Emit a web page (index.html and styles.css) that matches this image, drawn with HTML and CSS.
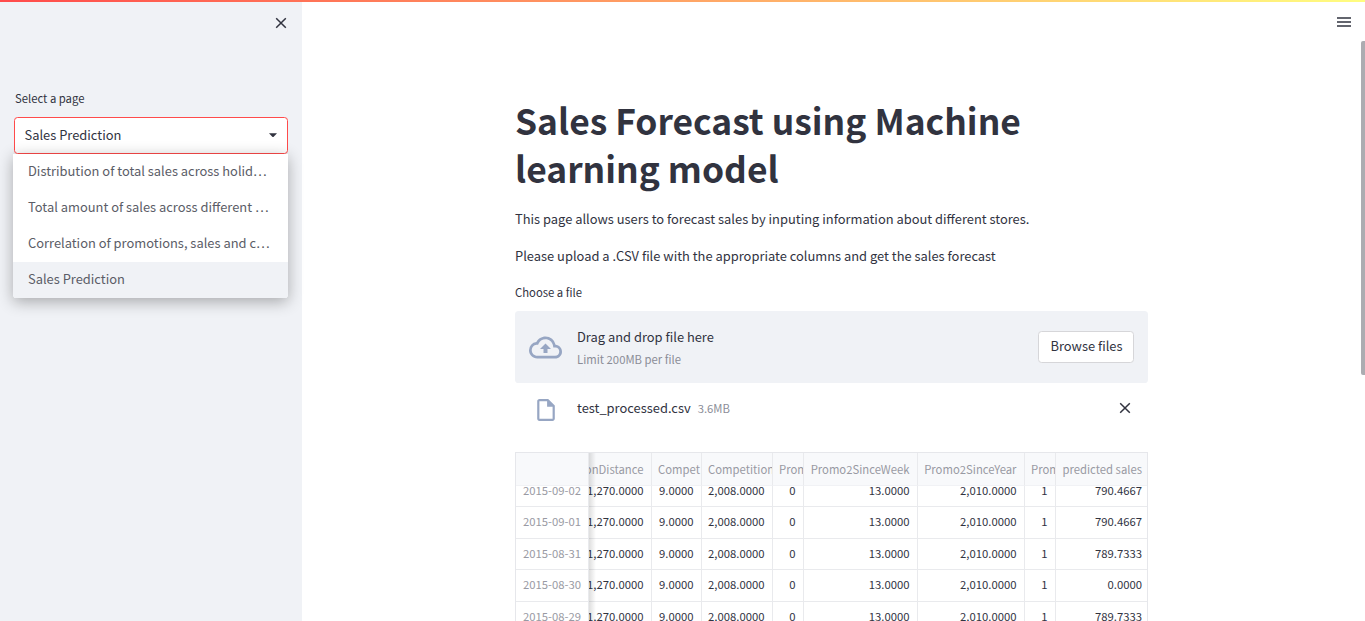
FILE: index.html
```html
<!DOCTYPE html>
<html lang="en">
<head>
<meta charset="utf-8">
<title>Sales Forecast</title>
<link rel="stylesheet" href="styles.css">
</head>
<body>
<div class="decoration"></div>
<div class="app">
  <aside class="sidebar">
    <div class="sidebar-top">
      <svg class="close" viewBox="0 0 12 12"><path d="M1.2 1.2 10.8 10.8M10.8 1.2 1.2 10.8"/></svg>
    </div>
    <div class="label side-label"><span>Select a page</span></div>
    <div class="select">
      <div class="select-box"><span>Sales Prediction</span><svg class="caret" viewBox="0 0 8 5"><path d="M0 .3h8L4.7 3.7q-.7.6-1.4 0z"/></svg></div>
      <ul class="menu">
        <li>Distribution of total sales across holid…</li>
        <li>Total amount of sales across different …</li>
        <li>Correlation of promotions, sales and c…</li>
        <li class="active">Sales Prediction</li>
      </ul>
    </div>
  </aside>
  <main class="main">
    <svg class="burger" viewBox="0 0 14 10"><path d="M0 1h14M0 5h14M0 9h14"/></svg>
    <div class="scrollbar"></div>
    <div class="content">
      <h1>Sales Forecast using Machine<br>learning model</h1>
      <p>This page allows users to forecast sales by inputing information about different stores.</p>
      <p class="last">Please upload a .CSV file with the appropriate columns and get the sales forecast</p>
      <div class="label file-label">Choose a file</div>
      <div class="dropzone">
        <svg class="cloud" viewBox="0 1.5 24 21"><path d="M19.35 10.04A7.49 7.49 0 0 0 12 4C9.11 4 6.6 5.64 5.35 8.04A5.994 5.994 0 0 0 0 14c0 3.31 2.69 6 6 6h13c2.76 0 5-2.24 5-5 0-2.64-2.05-4.78-4.65-4.96zM19 18H6c-2.21 0-4-1.79-4-4 0-2.05 1.53-3.76 3.56-3.97l1.07-.11.5-.95A5.469 5.469 0 0 1 12 6c2.62 0 4.88 1.86 5.39 4.43l.3 1.5 1.53.11A2.98 2.98 0 0 1 22 15c0 1.65-1.35 3-3 3zM8 13h2.55v3h2.9v-3H16l-4-4z"/></svg>
        <div class="drop-text"><div>Drag and drop file here</div><small>Limit 200MB per file</small></div>
        <button class="browse">Browse files</button>
      </div>
      <div class="file">
        <svg class="doc" viewBox="4 2 16 20"><path d="M14 2H6c-1.1 0-1.99.9-1.99 2L4 20c0 1.1.89 2 1.99 2H18c1.1 0 2-.9 2-2V8l-6-6zM6 20V4h7v5h5v11H6z"/></svg>
        <span class="fname">test_processed.csv</span><small class="fsize">3.6MB</small>
        <svg class="close fclose" viewBox="0 0 12 12"><path d="M1.2 1.2 10.8 10.8M10.8 1.2 1.2 10.8"/></svg>
      </div>
      <div class="table">
        <div class="row head"><b></b><b>onDistance</b><b>Compet</b><b>Competition</b><b>Prom</b><b>Promo2SinceWeek</b><b>Promo2SinceYear</b><b>Prom</b><b>predicted sales</b></div>
        <div class="rows">
          <div class="row"><b>2015-09-02</b><b>1,270.0000</b><b>9.0000</b><b>2,008.0000</b><b>0</b><b>13.0000</b><b>2,010.0000</b><b>1</b><b>790.4667</b></div>
          <div class="row"><b>2015-09-01</b><b>1,270.0000</b><b>9.0000</b><b>2,008.0000</b><b>0</b><b>13.0000</b><b>2,010.0000</b><b>1</b><b>790.4667</b></div>
          <div class="row"><b>2015-08-31</b><b>1,270.0000</b><b>9.0000</b><b>2,008.0000</b><b>0</b><b>13.0000</b><b>2,010.0000</b><b>1</b><b>789.7333</b></div>
          <div class="row"><b>2015-08-30</b><b>1,270.0000</b><b>9.0000</b><b>2,008.0000</b><b>0</b><b>13.0000</b><b>2,010.0000</b><b>1</b><b>0.0000</b></div>
          <div class="row"><b>2015-08-29</b><b>1,270.0000</b><b>9.0000</b><b>2,008.0000</b><b>0</b><b>13.0000</b><b>2,010.0000</b><b>1</b><b>789.7333</b></div>
        </div>
        <div class="freeze-shadow"></div>
      </div>
    </div>
  </main>
</div>
</body>
</html>
```
FILE: styles.css
```css
* { box-sizing: border-box; }
html, body { margin: 0; height: 621px; overflow: hidden; }
body { font: 12.9px/20px "Noto Sans CJK SC", "Noto Sans", sans-serif; color: #31333f; background: #fff; }
svg { display: block; flex: none; }
.decoration { position: absolute; z-index: 5; top: 0; left: 0; right: 0; height: 2px; background: linear-gradient(90deg, #ff4b4b, #fffd80); }
.app { display: flex; height: 621px; }

.sidebar { width: 302px; flex: none; background: #f0f2f6; padding: 0 14px; }
.sidebar-top { display: flex; justify-content: flex-end; padding: 17px 1px 0 0; height: 88px; }
.close { width: 12px; height: 12px; fill: none; stroke: #31333f; stroke-width: 1.5; }
.label { font-size: 11.3px; white-space: nowrap; }
.side-label { height: 29px; padding-left: 1px; }
.select { position: relative; }
.select-box { height: 37px; width: 274px; border: 1px solid #ff4b4b; border-radius: 3.6px; background: #fff; display: flex; align-items: center; justify-content: space-between; padding: 0 10px 0 10px; }
.select-box span { padding-bottom: 2px; margin-left: -.5px; }
.caret { width: 8px; height: 5px; fill: #31333f; }
.menu { position: absolute; top: 37px; left: -1px; width: 275px; height: 144px; margin: 0; padding: 0; list-style: none; background: #fff; border-radius: 0 0 3.6px 3.6px; overflow: hidden; box-shadow: 0 3.6px 14.4px rgba(0, 0, 0, .3); color: #5b5d67; }
.menu li { height: 36px; line-height: 33px; padding-left: 15px; white-space: nowrap; }
.menu .active { background: #f0f2f6; }

.main { position: relative; flex: 1; padding-left: 213px; }
.burger { position: absolute; left: 1035px; top: 17px; width: 14px; height: 10px; stroke: #31333f; stroke-width: 1.6; }
.scrollbar { position: absolute; right: 0; top: 41px; width: 4px; height: 334px; background: #acacb1; border-radius: 2px 0 0 2px; }
.content { width: 633px; padding-top: 96px; }
h1 { margin: 0; font-size: 35.4px; line-height: 48px; font-weight: 700; white-space: nowrap; height: 113px; }
p { margin: 0; white-space: nowrap; height: 37px; }
.last { height: 36px; }
.file-label { height: 29px; }
.dropzone { height: 72px; background: #f0f2f6; border-radius: 3.6px; display: flex; align-items: center; padding: 0 14px; }
.cloud { width: 33px; height: 29px; fill: #97a6c3; }
.drop-text { margin-left: 15px; padding-top: 2px; flex: 1; line-height: 22px; white-space: nowrap; }
small { display: block; font-size: 11.3px; color: #8b8d97; }
.browse { font: inherit; color: inherit; width: 96px; height: 32px; padding: 0 0 2px 1px; border: 1px solid #d6d6d9; border-radius: 3.6px; background: #fff; white-space: nowrap; }
.file { display: flex; align-items: center; height: 50px; padding-left: 22px; margin-bottom: 19px; }
.doc { width: 18px; height: 22px; margin-top: 4px; fill: #97a6c3; }
.fname { margin-left: 22px; }
.fsize { margin-left: 7px; }
.fclose { margin: 0 17px 0 auto; }

.table { position: relative; height: 169px; overflow: hidden; border: 1px solid #e6e7eb; border-bottom: 0; font-size: 11.3px; }
.row { display: grid; grid-template-columns: 73px 63px 50px 71px 31px 114px 107px 31px 91px; height: 31.5px; }
.row b { display: flex; justify-content: flex-end; align-items: center; font-weight: 400; white-space: nowrap; overflow: hidden; border-right: 1px solid #e9eaed; border-bottom: 1px solid #e9eaed; padding: 0 7.5px 2px 0; }
.row b:first-child { color: #999aa3; padding-right: 7px; }
.row b:last-child { border-right: 0; padding-right: 5px; }
.head { position: relative; height: 33px; background: #f8f9fb; color: #999aa3; }
.head b { border-bottom-color: #f1f2f5; padding-bottom: 0; }
.head b:nth-child(3), .head b:nth-child(4), .head b:nth-child(5), .head b:nth-child(8) { justify-content: flex-start; padding: 0 0 0 6px; }
.rows { height: 140px; overflow: hidden; display: flex; flex-direction: column; justify-content: flex-start; }
.rows .row { flex: none; }
.rows .row:first-child { margin-top: -10.5px; }
.freeze-shadow { position: absolute; left: 73px; top: 0; width: 7px; height: 169px; background: linear-gradient(90deg, rgba(0, 0, 0, .13), transparent); }
```
